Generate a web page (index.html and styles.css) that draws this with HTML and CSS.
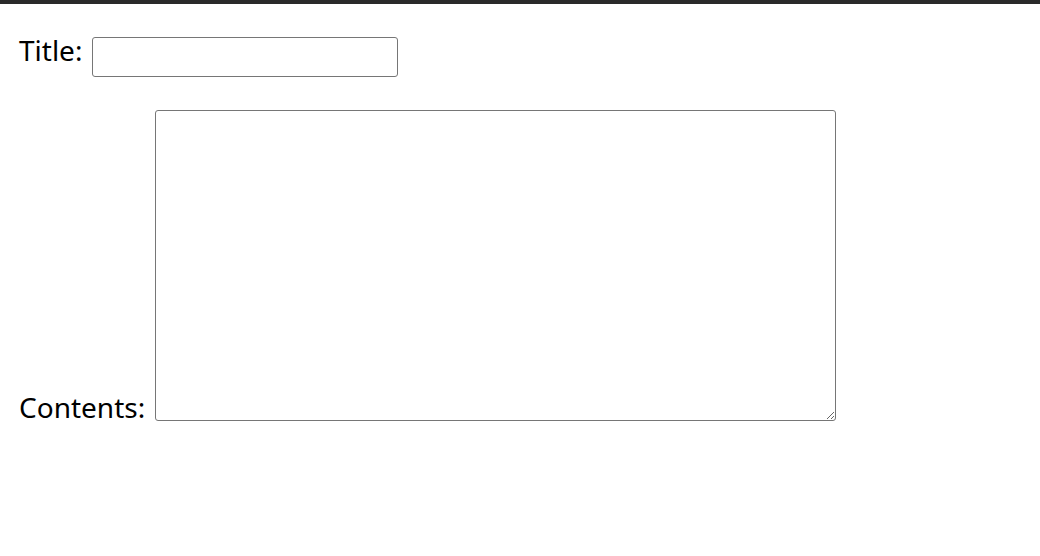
FILE: index.html
```html
<!DOCTYPE html>
<html lang="en">
<head>
  <meta charset="UTF-8" />
  <title>Write</title>
  <link rel="stylesheet" href="styles.css">
</head>
<body>
  <div class="top-bar"></div>
  <form class="post-form">
    <div class="form-row">
      <label for="title">Title:</label>
      <input type="text" id="title" name="title">
    </div>
    <div class="form-row form-row-bottom">
      <label for="contents">Contents:</label>
      <textarea id="contents" name="contents"></textarea>
    </div>
  </form>
</body>
</html>
```

FILE: styles.css
```css
body {
  margin: 0;
  font-family: 'Noto Sans', sans-serif;
  background-color: white;
}

.top-bar {
  height: 4px;
  background-color: #2a2a2a;
}

.post-form {
  padding: 32px 19px 0;
}

.form-row {
  display: flex;
  align-items: baseline;
  gap: 10px;
  font-size: 28px;
  line-height: 28px;
  color: #000;
}

.form-row-bottom {
  margin-top: 33px;
  align-items: flex-end;
}

.form-row input {
  width: 306px;
  height: 40px;
  box-sizing: border-box;
  border: 1px solid #767676;
  border-radius: 3px;
  margin: 0;
}

.form-row textarea {
  width: 681px;
  height: 311px;
  box-sizing: border-box;
  border: 1px solid #767676;
  border-radius: 3px;
  margin: 0;
  resize: both;
}
```
